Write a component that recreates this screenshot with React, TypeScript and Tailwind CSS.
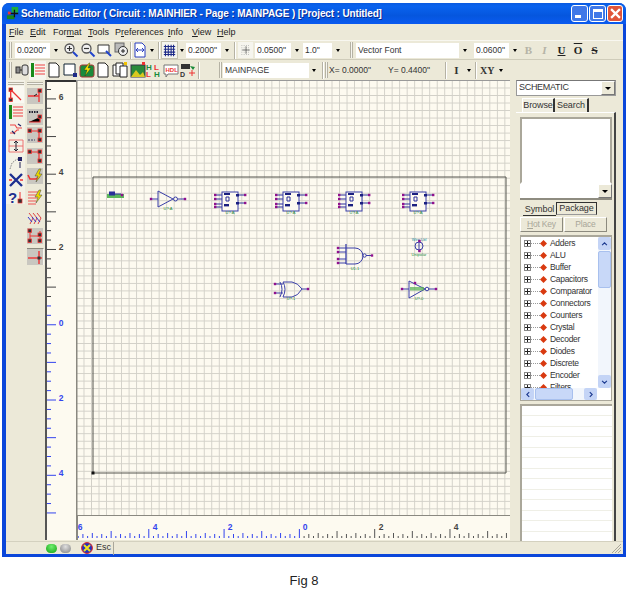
import React from "react";

const grid = "bg-[#fdfaf0] bg-[linear-gradient(to_right,#d2d0c8_1px,transparent_1px),linear-gradient(to_bottom,#d2d0c8_1px,transparent_1px)] bg-[size:7.53px_7.53px]";

function Icon({ children, className = "w-[16px] h-[16px]" }: { children: React.ReactNode; className?: string }) {
  return <svg viewBox="0 0 16 16" className={className + " shrink-0"}>{children}</svg>;
}
const Arrow = ({ className = "w-[12px]" }: { className?: string }) => (
  <div className={className + " h-[14px] flex items-center justify-center shrink-0"}>
    <div className="w-0 h-0 border-x-[2.5px] border-x-transparent border-t-[3px] border-t-black" />
  </div>
);
const Combo = ({ text, className }: { text: string; className: string }) => (
  <div className={className + " h-[15px] bg-white flex items-center pl-[2px] text-[8.5px] text-[#333] shrink-0 overflow-hidden whitespace-nowrap"}>{text}</div>
);
const Grip = ({ className = "" }: { className?: string }) => (
  <div className={className + " w-[3px] h-[16px] border-x border-x-[#b5b2a4] bg-[#f6f5ee] shrink-0"} />
);
const HGrip = () => <div className="w-[16px] h-[3px] border-y border-y-[#b5b2a4] bg-[#f6f5ee] shrink-0 mt-[2px]" />;
const Sep = ({ className = "" }: { className?: string }) => (
  <div className={className + " w-[2px] h-[17px] border-l border-l-[#b5b2a4] border-r border-r-white shrink-0"} />
);
const Dropdown = ({ className }: { className: string }) => (
  <div className={className + " bg-[#ece9d8] border border-[#fff] border-r-[#777] border-b-[#777] flex items-center justify-center shrink-0"}>
    <div className="w-0 h-0 border-x-[3px] border-x-transparent border-t-[3px] border-t-black" />
  </div>
);

const Cell = ({ children, className = "w-[17px]" }: { children: React.ReactNode; className?: string }) => (
  <div className={className + " h-[17px] flex items-center justify-center shrink-0"}>{children}</div>
);

const Mag = ({ sign }: { sign: string }) => (
  <Icon>
    <circle cx="6.5" cy="6.5" r="4.5" fill="#f2f2f2" stroke="#555" strokeWidth="1.3" />
    <path d={sign === "+" ? "M4 6.5h5M6.5 4v5" : "M4 6.5h5"} stroke="#333" strokeWidth="1.2" />
    <path d="M10 10l4.5 4.5" stroke="#2244cc" strokeWidth="2" />
  </Icon>
);

const Node = ({ x, y }: { x: number; y: number }) => <rect x={x} y={y} width="3.4" height="3.4" fill="#333" stroke="#e33" strokeWidth="0.8" />;

const leftA = [
  <Icon key="a"><Node x={1} y={1} /><Node x={1} y={11} /><path d="M3 3l10 10M2.7 3v9" stroke="#e33" strokeWidth="1.3" /></Icon>,
  <Icon key="b"><rect x="1" y="1" width="3" height="14" fill="#1a8a1a" /><path d="M5 3h10M5 6h10M5 9h10M5 12h10" stroke="#e44" strokeWidth="1.1" /></Icon>,
  <Icon key="c"><path d="M2 4h5l2 3h5M2 12h4l3-3h2" stroke="#e44" fill="none" strokeWidth="1.1" /><path d="M10 3l3 2M4 10l3 3" stroke="#226" strokeWidth="1.2" /></Icon>,
  <Icon key="d"><path d="M1 2h14M1 8h14M1 14h14M1 2v12M15 2v12" stroke="#e66" strokeWidth="0.9" /><path d="M8 3v10M6 5l2-2 2 2M6 11l2 2 2-2" stroke="#223" fill="none" /></Icon>,
  <Icon key="e"><path d="M2 14l2-6 5-4 5 2" stroke="#888" fill="none" strokeDasharray="1.5 1" /><rect x="10" y="2" width="4" height="4" fill="#226" /><path d="M12 7v6" stroke="#225" /></Icon>,
  <Icon key="f"><path d="M2 2l12 12M14 2L2 14" stroke="#1d2f90" strokeWidth="2.4" /><path d="M1 8h3M12 8h3" stroke="#e33" strokeWidth="1.4" /></Icon>,
  <Icon key="g"><text x="0" y="14" fontSize="15" fontWeight="700" fill="#1d2f90" fontFamily="Liberation Sans">?</text><path d="M12 3v8" stroke="#e33" /><rect x="10" y="10" width="4" height="4" fill="#333" stroke="#e33" strokeWidth="0.7" /></Icon>,
];

const bg = <rect x="0" y="0" width="16" height="16" fill="#c9c7c0" />;
const leftB: [string, React.ReactNode][] = [
  ["mt-[2px]", <Icon key="a">{bg}<path d="M1 8h11M12 3v11" stroke="#e33" strokeWidth="1.3" /><path d="M7 8l3-2" stroke="#222" /><Node x={11} y={1} /></Icon>],
  ["mt-[4px]", <Icon key="b">{bg}<path d="M2 3h10" stroke="#223" strokeDasharray="1.5 1" strokeWidth="2" /><path d="M2 13h11V8" stroke="#e33" strokeWidth="1.2" /><Node x={11} y={6} /></Icon>],
  ["mt-[1px]", <Icon key="c">{bg}<path d="M3 4h10M12 4v9" stroke="#e33" strokeWidth="1.2" /><Node x={1} y={2} /><Node x={11} y={2} /><Node x={11} y={11} /><path d="M1 13h7" stroke="#446" strokeDasharray="2 1" /></Icon>],
  ["mt-[4px]", <Icon key="d">{bg}<path d="M3 4h10M12 4v9" stroke="#e33" strokeWidth="1.2" /><Node x={1} y={2} /><Node x={11} y={2} /><Node x={11} y={11} /></Icon>],
  ["mt-[3px]", <Icon key="e">{bg}<path d="M1 7l2 4h6l3-2" stroke="#e33" strokeWidth="1.6" fill="none" /><path d="M12 1L8 8h3l-2 6 6-8h-3l2-5z" fill="#e8d800" stroke="#444" strokeWidth="0.5" /></Icon>],
  ["mt-[4px]", <Icon key="f"><path d="M1 3h12M1 6h10M1 9h9M1 12h8M1 15h8" stroke="#e55" strokeWidth="1" /><path d="M12 1L8 8h3l-2 6 6-8h-3l2-5z" fill="#e8d800" stroke="#444" strokeWidth="0.5" /></Icon>],
  ["mt-[5px]", <Icon key="g"><path d="M2 2l4 5-3 6M6 2l4 5-3 6M10 2l4 5-3 6" stroke="#d44" fill="none" /><path d="M1 6l4 5M5 6l4 5M9 6l4 5" stroke="#33c" fill="none" /></Icon>],
  ["mt-[0px]", <Icon key="h">{bg}<path d="M3 3v10M13 3v10M3 8h10" stroke="#e33" /><Node x={1} y={1} /><Node x={11} y={5} /><Node x={1} y={11} /><Node x={11} y={11} /></Icon>],
  ["mt-[4px] border border-[#f8f7f0] border-l-[#8c8a7e] border-t-[#8c8a7e]", <Icon key="i">{bg}<path d="M1 9h14" stroke="#e33" strokeWidth="1.4" /><path d="M12 2v13" stroke="#e33" strokeWidth="1.4" /><rect x="10.5" y="7.5" width="3" height="3" fill="#333" /></Icon>],
];

const cats = ["Adders", "ALU", "Buffer", "Capacitors", "Comparator", "Connectors", "Counters", "Crystal", "Decoder", "Diodes", "Discrete", "Encoder", "Filters"];

function IC({ x }: { x: number }) {
  const ys = [195, 199, 204, 207];
  return (
    <g>
      {ys.map((y) => <path key={y} d={`M${x + 1} ${y}h7`} stroke="#2a2f9a" />)}
      {ys.map((y) => <rect key={y} x={x} y={y - 1.2} width="2.4" height="2.4" fill="#90108c" />)}
      <rect x={x + 8} y="192" width="16" height="19" fill="#fdfaf0" stroke="#3a3fa8" strokeWidth="1" />
      <rect x={x + 10} y="193" width="6" height="2" fill="#1a1f80" />
      <rect x={x + 10} y="204" width="5" height="2.4" fill="#1a1f80" />
      <path d={`M${x + 12} 197h3v4h-3zM${x + 24} 195h7M${x + 24} 203h7`} stroke="#2a2f9a" fill="none" />
      <rect x={x + 22} y="194" width="3" height="2.5" fill="#1a1f80" />
      <rect x={x + 22} y="202" width="3" height="2.5" fill="#1a1f80" />
      <rect x={x + 30} y="193.8" width="2.4" height="2.4" fill="#90108c" />
      <rect x={x + 30} y="201.8" width="2.4" height="2.4" fill="#90108c" />
      <text x={x + 16} y="214" fontSize="4" fill="#1a8a3a" textAnchor="middle" fontFamily="Liberation Sans">U?:A</text>
    </g>
  );
}
const Pin = ({ x, y }: { x: number; y: number }) => <rect x={x - 1.2} y={y - 1.2} width="2.4" height="2.4" fill="#90108c" />;

function Canvas() {
  return (
    <svg viewBox="76 80 434 436" className="absolute inset-0 w-[434px] h-[436px]">
      <rect x="76" y="80" width="1.5" height="436" fill="#8a8880" />
      <rect x="76" y="80" width="434" height="1" fill="#999" />
      <rect x="76" y="515" width="434" height="1.5" fill="#8a8880" />
      <path d="M93 177H506V473H93Z" fill="none" stroke="#55544f" strokeWidth="1" />
      <rect x="91.5" y="471.5" width="3" height="3" fill="#111" />
      {/* small part */}
      <rect x="107" y="194" width="17" height="4" fill="#5bb85b" />
      <rect x="109" y="191.5" width="6" height="4" fill="#2a2f9a" />
      <path d="M115 194h6" stroke="#2a2f9a" />
      <Pin x={122} y={195} />
      {/* inverter */}
      <path d="M151 199h7M178 199h7" stroke="#3a3fa8" />
      <path d="M158 191L173 199L158 207Z" fill="none" stroke="#3a3fa8" />
      <circle cx="175.5" cy="199" r="2" fill="none" stroke="#3a3fa8" />
      <Pin x={151} y={199} /><Pin x={185} y={199} />
      <text x="168" y="210" fontSize="4" fill="#1a8a3a" textAnchor="middle" fontFamily="Liberation Sans">U?:A</text>
      <IC x={214} /><IC x={275} /><IC x={338} /><IC x={402} />
      {/* and */}
      <path d="M346 244V264" stroke="#3a3fa8" strokeWidth="1.3" />
      <path d="M339 248h7M339 252h7M339 259h7M339 263h7M366 255.5h6" stroke="#3a3fa8" />
      <path d="M346 248h9a8 8 0 0 1 0 16h-9" fill="none" stroke="#3a3fa8" />
      <circle cx="364.5" cy="255.5" r="1.7" fill="none" stroke="#3a3fa8" />
      <Pin x={338} y={248} /><Pin x={338} y={252} /><Pin x={338} y={259} /><Pin x={338} y={263} /><Pin x={372} y={255.5} />
      <text x="355" y="270" fontSize="4" fill="#1a8a3a" textAnchor="middle" fontFamily="Liberation Sans">U1-1</text>
      {/* or */}
      <path d="M280 282q4 7 0 15M283 282q4 7 0 15M283 282h9q6 1 10 7q-4 7-10 8h-9" fill="none" stroke="#3a3fa8" />
      <path d="M276 284h7M276 293h7M302 289h6" stroke="#3a3fa8" />
      <Pin x={275} y={284} /><Pin x={275} y={293} /><Pin x={308} y={289} />
      <text x="291" y="300" fontSize="4" fill="#1a8a3a" textAnchor="middle" fontFamily="Liberation Sans">U?-1</text>
      {/* buffer */}
      <path d="M409 281L425 289L409 298Z" fill="none" stroke="#3a3fa8" />
      <path d="M402 289h7M429 289h7" stroke="#3a3fa8" />
      <circle cx="427" cy="289" r="1.8" fill="none" stroke="#3a3fa8" />
      <Pin x={402} y={289} /><Pin x={436} y={289} /><Pin x={415} y={283} />
      <rect x="410" y="287" width="14" height="3.5" fill="#4fae4f" opacity="0.7" />
      <text x="419" y="300" fontSize="4" fill="#1a8a3a" textAnchor="middle" fontFamily="Liberation Sans">U?-0</text>
      {/* wire */}
      <text x="419" y="241" fontSize="4" fill="#1a8aa0" textAnchor="middle" fontFamily="Liberation Sans">Wire Lbl</text>
      <circle cx="419" cy="246" r="4" fill="none" stroke="#3a3fa8" />
      <path d="M419 240v12" stroke="#3a3fa8" />
      <Pin x={419.5} y={241} /><Pin x={419.5} y={251} />
      <text x="419" y="255.5" fontSize="4" fill="#1a8a3a" textAnchor="middle" fontFamily="Liberation Sans">Unipolar</text>
    </svg>
  );
}

function LeftRuler() {
  const ticks = Array.from({ length: 46 }, (_, i) => i);
  const labels: [string, number][] = [["6", 100], ["4", 175], ["2", 250], ["0", 326], ["2", 401], ["4", 476]];
  return (
    <svg viewBox="47 82 29 434" className="w-[29px] h-[434px]">
      {ticks.map((i) => {
        const y = 89.5 + i * 9.41;
        const long = i % 4 === 1;
        const col = y > 305 ? "#3344ee" : "#444";
        return <path key={i} d={`M47 ${y}h${long ? 9 : 4}`} stroke={col} />;
      })}
      {labels.map(([t, y], i) => <text key={i} x="61" y={y} fontSize="8.5" textAnchor="middle" fontWeight="700" fontFamily="Liberation Sans" fill={i > 2 ? "#3344ee" : "#444"}>{t}</text>)}
    </svg>
  );
}
function BottomRuler() {
  const ticks = Array.from({ length: 92 }, (_, i) => i + 1);
  const labels: [string, number][] = [["6", 80], ["4", 155], ["2", 230], ["0", 305], ["2", 381], ["4", 456]];
  return (
    <svg viewBox="78 516 432 24" className="w-[432px] h-[24px]">
      {ticks.map((i) => {
        const x = 73.5 + i * 4.706;
        const h = i % 16 === 0 ? 9 : i % 8 === 0 ? 7 : i % 4 === 0 ? 5 : i % 2 === 0 ? 4 : 2;
        return <path key={i} d={`M${x} 538v-${h}`} stroke={x < 301 ? "#3344ee" : "#555"} />;
      })}
      {labels.map(([t, x], i) => <text key={i} x={x} y="530" fontSize="8.5" textAnchor="middle" fontFamily="Liberation Sans" fontWeight="700" fill={i === 3 || i < 3 ? "#3344ee" : "#444"}>{t}</text>)}
    </svg>
  );
}

export default function App() {
  return (
    <div className="w-[628px] h-[592px] bg-white font-['Liberation_Sans',sans-serif] relative overflow-hidden pl-[2px] pt-[3px]">
      <div className="w-[624px] h-[554px] flex flex-col rounded-t-[7px] bg-[#0a46da] px-[4px] pb-[3px]">
        {/* title */}
        <div className="h-[21px] -mx-[4px] rounded-t-[7px] flex items-center pl-[4px] pr-[3px] bg-[linear-gradient(to_bottom,#0a5ae0,#0a63ee_15%,#0556de_60%,#0a5af0)] shrink-0">
          <Icon className="w-[15px] h-[15px]"><rect x="1" y="10" width="8" height="4" fill="#1a8a1a" /><rect x="6" y="1" width="7" height="6" fill="#1fae3a" /><path d="M9 4v8M3 8h10" stroke="#111" strokeWidth="1.4" /><rect x="2" y="6" width="3" height="3" fill="#e33" /></Icon>
          <span className="ml-[0px] text-white font-bold text-[10px] tracking-[-0.13px] whitespace-nowrap [text-shadow:1px_1px_#0a2a90]">Schematic Editor ( Circuit : MAINHIER - Page : MAINPAGE ) [Project : Untitled]</span>
          <div className="ml-auto flex gap-[1px]">
            <div className="w-[17px] h-[17px] rounded-[3px] border border-white bg-[#3f78e8] flex items-end pl-[3px] pb-[3px]"><div className="w-[6px] h-[3px] bg-white" /></div>
            <div className="w-[17px] h-[17px] rounded-[3px] border border-white bg-[#3f78e8] flex items-center justify-center"><div className="w-[10px] h-[10px] border border-white border-t-[3px]" /></div>
            <div className="w-[16px] h-[17px] rounded-[3px] border border-white bg-[#e0553a] flex items-center justify-center">
              <svg viewBox="0 0 10 10" className="w-[11px] h-[11px]"><path d="M1 1l8 8M9 1l-8 8" stroke="#fff" strokeWidth="2" /></svg>
            </div>
          </div>
        </div>
        <div className="flex-1 flex flex-col bg-[#ece9d8] min-h-0 -mr-[1px]">
          {/* menu */}
          <div className="h-[15px] flex items-center text-[9px] text-[#222] pl-[3px] shrink-0 mt-[1px]">
            <span className="w-[21px]"><u>F</u>ile</span>
            <span className="w-[23px]"><u>E</u>dit</span>
            <span className="w-[35px]">For<u>m</u>at</span>
            <span className="w-[27px]"><u>T</u>ools</span>
            <span className="w-[53px]">P<u>r</u>eferences</span>
            <span className="w-[24px]"><u>I</u>nfo</span>
            <span className="w-[25px]"><u>V</u>iew</span>
            <span><u>H</u>elp</span>
          </div>
          {/* toolbar 1 */}
          <div className="h-[20px] flex items-center border-t border-t-[#f8f7f0] border-b border-b-[#cfccba] shrink-0 text-[#333]">
            <Grip className="ml-[3px]" />
            <Combo text={'0.0200"'} className="ml-[3px] w-[35px]" />
            <Arrow />
            <Cell className="ml-[1px]"><Mag sign="+" /></Cell>
            <Cell><Mag sign="-" /></Cell>
            <Cell><Icon><path d="M1 3h11v8H1z" fill="#fff" stroke="#333" /><path d="M9 9l5 5" stroke="#2244cc" strokeWidth="2" /></Icon></Cell>
            <Cell><Icon><rect x="1" y="1" width="9" height="9" fill="#bbb" stroke="#666" /><circle cx="9" cy="9" r="4.5" fill="#eee" stroke="#333" /><path d="M7 9h4M9 7v4" stroke="#222" /></Icon></Cell>
            <Sep />
            <Cell className="w-[16px]"><Icon><path d="M3 1h7l3 3v11H3z" fill="#fff" stroke="#2a3fc0" /><path d="M4 8h8M6 6L4 8l2 2M10 6l2 2-2 2" stroke="#2a3fc0" fill="none" /></Icon></Cell>
            <Arrow className="w-[8px]" />
            <Sep className="ml-[2px]" />
            <div className="ml-[1px] w-[17px] h-[18px] bg-[#f6f5ee] border border-[#c5c2b0] flex items-center justify-center shrink-0">
              <Icon className="w-[13px] h-[13px]"><path d="M3 1v14M6.5 1v14M10 1v14M13 1v14M1 3h14M1 6.5h14M1 10h14M1 13h14" stroke="#1d2a88" strokeWidth="1.3" /></Icon>
            </div>
            <Arrow className="w-[7px]" />
            <Combo text={'0.2000"'} className="ml-[1px] w-[35px]" />
            <Arrow />
            <Sep className="ml-[1px]" />
            <div className="ml-[2px] w-[15px] h-[16px] bg-[#f6f5ee] flex items-center justify-center shrink-0">
              <Icon className="w-[12px] h-[12px]"><path d="M2 2h12M2 5h12M2 8h12M2 11h12M2 14h12" stroke="#999" strokeDasharray="1 2" /><path d="M8 3v10M3 8h10" stroke="#555" /></Icon>
            </div>
            <Combo text={'0.0500"'} className="ml-[2px] w-[36px]" />
            <Arrow />
            <Combo text={'1.0"'} className="w-[29px]" />
            <Arrow />
            <Grip className="ml-[6px]" />
            <Combo text="Vector Font" className="ml-[3px] w-[103px]" />
            <Arrow />
            <Combo text={'0.0600"'} className="ml-[3px] w-[35px]" />
            <Arrow />
            <div className="w-[83px] flex items-center font-['Liberation_Serif',serif] font-bold text-[11px] text-[#222] shrink-0">
              <span className="w-[15px] text-center text-[#b5b3a6]">B</span>
              <span className="w-[17px] text-center italic text-[#b5b3a6]">I</span>
              <span className="w-[17px] text-center underline">U</span>
              <span className="w-[16px] text-center overline">O</span>
              <span className="w-[17px] text-center line-through">S</span>
            </div>
          </div>
          {/* toolbar 2 */}
          <div className="h-[20px] flex items-center shrink-0 text-[#333]">
            <Grip className="ml-[3px]" />
            <Cell className="ml-[2px] w-[15px]"><Icon><rect x="2" y="5" width="4" height="6" fill="#888" stroke="#333" /><rect x="8" y="3" width="6" height="10" rx="2" fill="#ddd" stroke="#333" /><path d="M6 8h2" stroke="#222" /></Icon></Cell>
            <Cell className="w-[17px] bg-[#f6f5ee] h-[19px]"><Icon><rect x="1" y="1" width="3" height="14" fill="#1a8a1a" /><path d="M5 3h10M5 6h10M5 9h10M5 12h10" stroke="#e44" strokeWidth="1.1" /></Icon></Cell>
            <Cell className="w-[16px]"><Icon><path d="M3 1h7l3 3v11H3z" fill="#fff" stroke="#222" /></Icon></Cell>
            <Cell className="w-[16px]"><Icon><path d="M2 2h11v11H2z" fill="#fff" stroke="#123" /><rect x="11" y="11" width="4" height="4" fill="#1d2a88" /></Icon></Cell>
            <Cell className="w-[17px]"><Icon><rect x="1" y="3" width="14" height="12" rx="2" fill="#1a8a3a" stroke="#a33" /><path d="M10 1L5 8h3l-2 6 6-8H9l2-5z" fill="#f2e200" stroke="#222" strokeWidth="0.4" /></Icon></Cell>
            <Cell className="w-[16px]"><Icon><path d="M3 1h7l3 3v11H3z" fill="#fff" stroke="#222" /></Icon></Cell>
            <Cell className="w-[18px]"><Icon><path d="M1 3h7v11H1z" fill="#fff" stroke="#222" /><path d="M4 1h7v11H4z" fill="#fff" stroke="#222" /><path d="M8 4h7v11H8z" fill="#fff" stroke="#222" /><rect x="12" y="0" width="3" height="3" fill="#f2c200" /></Icon></Cell>
            <Cell className="w-[17px]"><Icon><rect x="1" y="3" width="14" height="12" fill="#2a8a3a" stroke="#334" /><path d="M1 15l5-7 4 5 3-3 2 5z" fill="#d8c820" /><rect x="12" y="0" width="3" height="3" fill="#e33" /></Icon></Cell>
            <Cell className="w-[16px]"><Icon><text x="0" y="7.5" fontSize="8" fontWeight="700" fill="#1a8a3a" fontFamily="Liberation Sans">H</text><text x="8" y="7.5" fontSize="8" fontWeight="700" fill="#e33" fontFamily="Liberation Sans">L</text><text x="0" y="15" fontSize="8" fontWeight="700" fill="#e33" fontFamily="Liberation Sans">L</text><text x="8" y="15" fontSize="8" fontWeight="700" fill="#1a8a3a" fontFamily="Liberation Sans">H</text></Icon></Cell>
            <Cell className="w-[17px]"><Icon><path d="M1 3h14v9H5l-2 3v-3H1z" fill="#fff" stroke="#777" /><text x="2.5" y="9.5" fontSize="6" fontWeight="700" fill="#e33" fontFamily="Liberation Sans">HDL</text></Icon></Cell>
            <Cell className="w-[17px]"><Icon><rect x="1" y="2" width="9" height="5" fill="#333" /><path d="M10 4l5 1-2 3" fill="#1a8a3a" /><text x="0" y="15" fontSize="7" fontWeight="700" fill="#333" fontFamily="Liberation Sans">D</text><path d="M9 11h6M12 8v6" stroke="#e33" /></Icon></Cell>
            <Sep className="ml-[2px]" />
            <Grip className="ml-[19px]" />
            <Combo text="MAINPAGE" className="ml-[1px] w-[86px]" />
            <Arrow className="w-[10px]" />
            <Sep className="ml-[3px]" />
            <Grip className="ml-[1px]" />
            <span className="ml-[1px] w-[59px] text-[8.5px] whitespace-nowrap shrink-0">X= 0.0000"</span>
            <span className="w-[57px] text-[8.5px] whitespace-nowrap shrink-0">Y= 0.4400"</span>
            <Sep />
            <span className="ml-[1px] w-[17px] text-center font-['Liberation_Serif',serif] font-bold text-[11px] shrink-0">I</span>
            <Arrow className="w-[8px]" />
            <Sep className="ml-[2px]" />
            <span className="ml-[3px] w-[17px] font-['Liberation_Serif',serif] font-bold text-[10px] shrink-0">XY</span>
            <Arrow className="w-[8px]" />
          </div>
          {/* main */}
          <div className="flex-1 flex min-h-0">
            {/* left toolbars */}
            <div className="w-[39px] flex shrink-0">
              <div className="w-[19px] h-[124px] bg-[#f3f1e6] flex flex-col items-center shrink-0">
                <HGrip />
                <div className="h-[1px] shrink-0" />
                {leftA.map((ic, i) => <Cell key={i} className={(i === 0 ? "bg-[#faf9f2] " : "") + "w-[17px]"}>{ic}</Cell>)}
              </div>
              <div className="w-[20px] flex flex-col items-center shrink-0">
                <HGrip />
                {leftB.map(([m, ic], i) => <Cell key={i} className={m + " w-[17px]"}>{ic}</Cell>)}
              </div>
            </div>
            {/* center */}
            <div className="w-[465px] flex flex-col shrink-0">
              <div className="flex h-[436px] shrink-0">
                <div className="w-[31px] h-[436px] bg-[#fdfaf0] border-l-2 border-l-[#555] border-t-2 border-t-[#333] overflow-hidden shrink-0"><LeftRuler /></div>
                <div className={"relative w-[434px] h-[436px] overflow-hidden shrink-0 " + grid}>
                  <Canvas />
                </div>
              </div>
              <div className="flex h-[24px] shrink-0">
                <div className="w-[31px] bg-[#fdfaf0] border-l-2 border-l-[#555] shrink-0" />
                <div className="w-[434px] bg-[#fdfaf0] border-l-2 border-l-[#8a8880] overflow-hidden shrink-0"><BottomRuler /></div>
              </div>
            </div>
            {/* right panel */}
            <div className="flex-1 pl-[6px] text-[8.5px] tracking-[-0.2px] text-[#333] flex flex-col relative">
              <div className="w-[100px] h-[16px] bg-white border border-[#999] border-t-[#777] flex items-center pl-[2px] justify-between shrink-0 text-[9px] tracking-[-0.3px]">
                <span>SCHEMATIC</span>
                <Dropdown className="w-[14px] h-[14px]" />
              </div>
              <div className="flex ml-[6px] mt-[2px] h-[14px] shrink-0 text-[9px] tracking-[-0.1px]">
                <div className="w-[33px] h-[14px] bg-[#f0eee2] border-t border-l border-r-2 border-white border-r-[#333] text-center leading-[13px]">Browse</div>
                <div className="w-[34px] h-[14px] border-t border-white border-r-2 border-r-[#333] text-center leading-[13px]">Search</div>
              </div>
              <div className="w-[100px] flex-1 border-r-2 border-r-[#444] border-t border-t-white pl-[4px] pt-[4px] flex flex-col">
                <div className="w-[92px] h-[67px] bg-white border-2 border-[#aaa79a] border-b-white shrink-0" />
                <div className="w-[92px] h-[14px] bg-white flex justify-end shrink-0"><Dropdown className="w-[14px] h-[14px]" /></div>
                <div className="w-[92px] h-[2px] bg-[#8e8c80] shrink-0" />
                <div className="flex ml-[3px] mt-[2px] h-[14px] shrink-0 text-[9px] tracking-[-0.1px]">
                  <div className="w-[33px] h-[14px] text-center leading-[14px] border-b border-b-[#333]">Symbol</div>
                  <div className="w-[41px] h-[13px] border border-[#333] border-b-[#999] text-center leading-[11px]">Package</div>
                </div>
                <div className="flex mt-[1px] gap-[1px] h-[15px] shrink-0 text-[#a8a698]">
                  <div className="w-[43px] h-[15px] border border-white border-r-[#8c8a7e] border-b-[#8c8a7e] text-center leading-[13px]"><u>H</u>ot Key</div>
                  <div className="w-[43px] h-[15px] border border-white border-r-[#8c8a7e] border-b-[#8c8a7e] text-center leading-[13px]">Place</div>
                </div>
                {/* tree */}
                <div className="mt-[3px] w-[92px] h-[166px] bg-white border border-[#aaa79a] border-t-2 flex flex-col shrink-0">
                  <div className="flex h-[151px] shrink-0">
                    <div className="w-[76px] h-[151px] overflow-hidden shrink-0">
                      {cats.map((c) => (
                        <div key={c} className="h-[12px] flex items-center shrink-0 whitespace-nowrap text-[8.5px] tracking-[-0.3px] text-[#333]">
                          <div className="ml-[3px] w-[7px] h-[7px] border border-[#888] flex items-center justify-center relative shrink-0">
                            <div className="w-[5px] h-[1px] bg-[#222]" />
                            <div className="absolute w-[1px] h-[5px] bg-[#222]" />
                          </div>
                          <div className="w-[9px] border-t border-dotted border-t-[#999] shrink-0" />
                          <svg viewBox="0 0 8 8" className="w-[7px] h-[7px] shrink-0"><path d="M4 0L8 4L4 8L0 4Z" fill="#d93a10" /></svg>
                          <span className="ml-[3px]">{c}</span>
                        </div>
                      ))}
                    </div>
                    <div className="w-[13px] ml-[1px] flex flex-col bg-[#f2f6fc] shrink-0">
                      <div className="h-[13px] rounded-[2px] bg-[#c4d4f6] flex items-center justify-center shrink-0"><svg viewBox="0 0 8 5" className="w-[7px] h-[4px]"><path d="M1 4l3-3 3 3" fill="none" stroke="#1d3a90" strokeWidth="1.4" /></svg></div>
                      <div className="h-[37px] rounded-[2px] bg-[#c8d8f8] border border-[#a8c0ee] shrink-0 mt-[1px]" />
                      <div className="flex-1" />
                      <div className="h-[13px] rounded-[2px] bg-[#c4d4f6] flex items-center justify-center shrink-0"><svg viewBox="0 0 8 5" className="w-[7px] h-[4px]"><path d="M1 1l3 3 3-3" fill="none" stroke="#1d3a90" strokeWidth="1.4" /></svg></div>
                    </div>
                  </div>
                  <div className="h-[12px] flex bg-[#f2f6fc] w-[76px] shrink-0">
                    <div className="w-[13px] rounded-[2px] bg-[#c4d4f6] flex items-center justify-center shrink-0"><svg viewBox="0 0 5 8" className="w-[4px] h-[7px]"><path d="M4 1L1 4l3 3" fill="none" stroke="#1d3a90" strokeWidth="1.4" /></svg></div>
                    <div className="w-[38px] rounded-[2px] bg-[#c8d8f8] border border-[#a8c0ee] ml-[1px] shrink-0" />
                    <div className="flex-1" />
                    <div className="w-[13px] rounded-[2px] bg-[#c4d4f6] flex items-center justify-center shrink-0"><svg viewBox="0 0 5 8" className="w-[4px] h-[7px]"><path d="M1 1l3 3-3 3" fill="none" stroke="#1d3a90" strokeWidth="1.4" /></svg></div>
                  </div>
                </div>
                {/* lined list */}
                <div className="mt-[3px] w-[92px] flex-1 border-t-2 border-t-[#aaa79a] border-l-2 border-l-[#aaa79a] bg-white bg-[repeating-linear-gradient(to_bottom,#fff_0px,#fff_9.5px,#efefe6_9.5px,#efefe6_10.5px)]" />
              </div>
            </div>
          </div>
          {/* status */}
          <div className="h-[13px] flex items-center shrink-0 border-t border-t-[#d4d1bf] relative">
            <div className="ml-[40px] w-[11px] h-[9px] rounded-full bg-[radial-gradient(circle_at_50%_30%,#70f070,#10a010)] shrink-0" />
            <div className="ml-[3px] w-[11px] h-[9px] rounded-full bg-[radial-gradient(circle_at_50%_30%,#e0e0e0,#808080)] shrink-0" />
            <div className="ml-[10px] flex items-center w-[33px] h-[13px] border-r border-r-[#aaa79a] shrink-0">
              <svg viewBox="0 0 12 12" className="w-[12px] h-[12px] shrink-0"><circle cx="6" cy="6" r="5.4" fill="#2030c0" stroke="#e02020" /><path d="M3 3l6 6M9 3l-6 6" stroke="#f0e020" strokeWidth="2" /></svg>
              <span className="ml-[3px] text-[9px] text-[#333]">Esc</span>
            </div>
            <svg viewBox="0 0 12 12" className="absolute right-[1px] bottom-0 w-[12px] h-[12px]"><path d="M11 2L2 11M11 5L5 11M11 8L8 11" stroke="#aaa79a" /></svg>
          </div>
        </div>
      </div>
      <div className="absolute left-0 top-[571px] w-[608px] text-center font-['Liberation_Sans',sans-serif] text-[13px] text-[#222]">Fig 8</div>
    </div>
  );
}
